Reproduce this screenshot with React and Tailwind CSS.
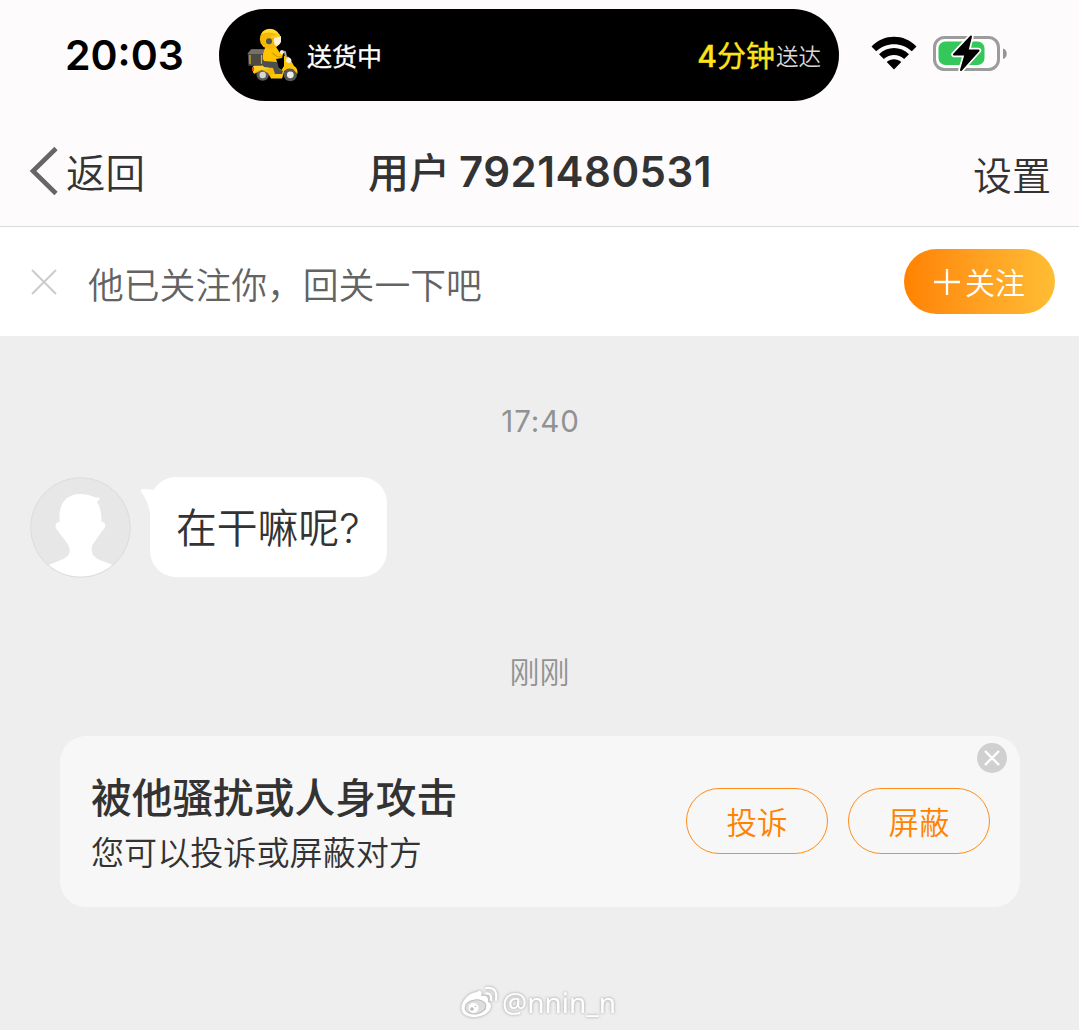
import React from 'react';

const CJK = "font-['Noto_Sans_CJK_SC',sans-serif]";
const LATIN = "font-['Inter',sans-serif]";

function Courier() {
  return (
    <svg width="52" height="56" viewBox="0 -1 52 56" className="shrink-0">
      <circle cx="15.700" cy="46.500" r="6.200" fill="#5c5c5c" />
      <circle cx="15.700" cy="47" r="3.200" fill="#d6d6d2" />
      <circle cx="43.300" cy="46.500" r="6.700" fill="#565858" />
      <circle cx="43.300" cy="46.800" r="3.400" fill="#ececec" />
      <path d="M6 38H29L37 44L35 50.500H24L21 45L15 42L7 46L5.500 42Z" fill="#f6b906" />
      <path d="M7 37H19L22 41L11 42L6 45Z" fill="#ffd026" />
      <path d="M5 39H7V43H5Z" fill="#e64020" />
      <path d="M37 28L42 29L47 38Q51 40 50.500 46L46 41Q39 39 36 45L35 50H24L25 46H32L37 38Z" fill="#ffc50a" />
      <path d="M0.700 25L4 21.300H18.700V34L15 37.700H1.500Z" fill="#4d4943" />
      <path d="M0.700 26L4.500 21.300H18.700L16 26Z" fill="#77706a" />
      <path d="M3 27V36M14.500 27V36" stroke="#d9b21a" strokeWidth="1.200" />
      <path d="M17 31.500L30 33L32 41L36 43L35 46H28L26 40L17 39L14.500 36Z" fill="#4c4e50" />
      <path d="M18 20L29 19L33 25L36 26L35 30L29 31L30 34L17 33Q14 30 18 20Z" fill="#ffc400" />
      <path d="M25 25L30 28.500L35 29" stroke="#d69600" strokeWidth="1.200" fill="none" />
      <path d="M34 23L38 24L39 29" stroke="#aaa" strokeWidth="2" fill="none" />
      <circle cx="34.800" cy="24.200" r="2" fill="#f5eadb" />
      <circle cx="41.700" cy="32.300" r="2.600" fill="#f4f4ed" />
      <circle cx="23" cy="11" r="10.200" fill="#f7b806" />
      <path d="M14 6C18-1 29-1 33 8Q24 2 14 6Z" fill="#ffda32" />
      <path d="M27 10L34 8V14Q32 18 29 18Q26 16 27 10Z" fill="#fff0d6" />
      <path d="M24 9L33 7.500" stroke="#ffce1c" strokeWidth="2" />
      <circle cx="22" cy="13.200" r="3" fill="#51534e" />
    </svg>
  );
}

function Wifi() {
  return (
    <svg width="46" height="34" viewBox="0 0 46 34" className="shrink-0">
      <path d="M0.500 10.500C13-2.500 33-2.500 45.500 10.500L40.800 15.300C30.800 5.800 15.200 5.800 5.200 15.300Z" />
      <path d="M8 18.300C16.400 10 29.600 10 38 18.300L33.200 23.100C27.200 17.700 18.800 17.700 12.800 23.100Z" />
      <path d="M15.700 26C20 22.300 26 22.300 30.300 26L23 33.500Z" />
    </svg>
  );
}

function Battery() {
  return (
    <svg width="76" height="42" viewBox="0 0 76 42" className="shrink-0">
      <rect x="2.500" y="5.500" width="64" height="32" rx="10" fill="#fefcfd" stroke="#9d9c9d" strokeWidth="3" />
      <path d="M71 16.500c5 1.500 5 9 0 10.500z" fill="#969596" />
      <rect x="6.500" y="9.500" width="46" height="23.500" rx="7" fill="#34c759" />
      <path d="M39 4.500L22 22.500h11.500l-4.500 15.500L46.500 18.500H35.500Z" fill="#000" stroke="#fff" strokeWidth="5.500" strokeLinejoin="round" />
      <path d="M39 4.500L22 22.500h11.500l-4.500 15.500L46.500 18.500H35.500Z" stroke="#000" strokeWidth="2" strokeLinejoin="round" />
    </svg>
  );
}

function StatusBar() {
  return (
    <div className="flex h-[110px] pt-[9px]">
      <div className={`w-[219px] pl-[65px] text-[41px] font-semibold leading-[92px] text-black ${LATIN}`}>20:03</div>
      <div className="flex h-[92px] w-[620px] items-center rounded-full bg-black pl-[28px] pr-[18px]">
        <Courier />
        <span className="ml-[8px] text-[25px] font-normal leading-[36px] text-white [-webkit-text-stroke:0.300px_#fff]">送货中</span>
        <div className="ml-auto flex items-center whitespace-nowrap">
          <span className="text-[29px] font-normal leading-[36px] text-[#ffe31a] [-webkit-text-stroke:0.400px_#ffe31a]"><span className={`text-[30px] font-medium ${LATIN}`}>4</span>分钟</span>
          <span className="ml-px pb-px text-[22.500px] font-[350] leading-[34px] text-[#d8d8d8]">送达</span>
        </div>
      </div>
      <div className="flex h-[88px] items-center pl-[32px]">
        <Wifi />
        <div className="ml-[15px]"><Battery /></div>
      </div>
    </div>
  );
}

function NavBar() {
  return (
    <div className="grid h-[116px] grid-cols-[1fr_auto_1fr] pl-[29px] pr-[28px]">
      <div className="flex h-[122px] items-center">
        <svg width="30" height="50" viewBox="0 0 30 50" fill="none" stroke="#666" strokeWidth="4.600">
          <path d="M27 2.500L4 25L27 47.500" />
        </svg>
        <span className="ml-[7px] text-[39.500px] font-[350] leading-[122px] text-[#333]">返回</span>
      </div>
      <h1 className="flex whitespace-nowrap leading-[121px] text-[#333]">
        <span className="text-[41px] font-medium">用户</span>
        <span className={`ml-[9px] text-[42px] font-semibold leading-[123px] tracking-[0.500px] ${LATIN}`}>7921480531</span>
      </h1>
      <span className="justify-self-end text-[39px] font-[350] leading-[126px] text-[#333]">设置</span>
    </div>
  );
}

function FollowBar() {
  return (
    <section className="flex h-[109px] items-center bg-white pl-[30px] pr-6">
      <svg width="28" height="28" viewBox="0 0 28 28" stroke="#ccc" strokeWidth="2">
        <path d="M2 2L26 26M26 2L2 26" />
      </svg>
      <span className="ml-[30px] pt-[2px] text-[35.800px] font-[350] leading-[40px] text-[#636363]">他已关注你，回关一下吧</span>
      <button className="ml-auto flex h-[65px] w-[151px] items-center justify-center rounded-full bg-gradient-to-r from-[#ff8200] to-[#ffbd34] text-white">
        <svg width="26" height="26" viewBox="0 0 26 26" stroke="white" strokeWidth="2.300"><path d="M13 0V26M0 13H26" /></svg>
        <span className="ml-[5px] pb-[2px] text-[30px] font-[350] leading-[60px]">关注</span>
      </button>
    </section>
  );
}

function Avatar() {
  return (
    <svg width="101" height="101" viewBox="0 0 101 101" className="shrink-0">
      <defs><clipPath id="avatar"><circle cx="50.500" cy="50" r="49.500" /></clipPath></defs>
      <circle cx="50.500" cy="50.500" r="49.800" fill="#e7e7e7" stroke="#dcdcdc" />
      <path clipPath="url(#avatar)" fill="#fff" d="M29.500 45V38C30 24 39 17 50 17C59 17 64 21 70 20.500Q69 24 67 25Q72 32 71.500 45C77 45 76 51 72 54L63 67Q61 70 62 75C63 83 76 84 84 89V101H17V89C26 84 39 82 39.500 75Q40 70 37 66L28 54C24 50 25 45 29.500 45Z" />
    </svg>
  );
}

function Action({ children }) {
  return <button className="h-[66px] w-[142px] rounded-full border-[1.500px] border-[#ff8d19] text-[30.500px] font-[350] leading-[61px] text-[#ff8200]">{children}</button>;
}

function ReportCard() {
  return (
    <section className="relative ml-[60px] mt-[43px] flex h-[171px] w-[960px] rounded-[26px] bg-[#f7f7f7] pl-[31px] pr-[30px]">
      <div className="pt-[32px] text-[#333]">
        <h2 className="text-[40.700px] font-medium leading-[56px]">被他骚扰或人身攻击</h2>
        <p className="text-[33.100px] font-[350] leading-[54px]">您可以投诉或屏蔽对方</p>
      </div>
      <div className="ml-auto flex gap-5 pt-[52px]"><Action>投诉</Action><Action>屏蔽</Action></div>
      <button aria-label="关闭" className="absolute right-[13px] top-[7px]">
        <svg width="30" height="30" viewBox="0 0 30 30"><circle cx="15" cy="15" r="15" fill="#d0d0d0" /><path d="M8 8L22 22M22 8L8 22" stroke="#fff" strokeWidth="2.400" /></svg>
      </button>
    </section>
  );
}

function Watermark() {
  return (
    <div className="mt-[76px] flex h-[40px] items-center justify-center pr-[3px] text-white drop-shadow-[0_0_1.500px_#999]">
      <svg width="40" height="36" viewBox="0 0 40 36" fill="none">
        <path d="M17 7C20 4 23 7 21 11C26 10 29 12 28 17C32 18 32 23 28 27C21 34 5 34 2 26C-1 18 9 7 17 7Z" fill="white" />
        <ellipse cx="15.500" cy="22" rx="10.500" ry="7" fill="#ddd" stroke="#bbb" transform="rotate(-7 15 22)" />
        <circle cx="13.500" cy="23" r="5" fill="white" /><circle cx="12" cy="24" r="1.800" fill="#bbb" /><circle cx="15.500" cy="21.500" r=".8" fill="#bbb" />
        <path d="M26 8.500Q32 8 31 15M26 3Q38 1.500 36 15" stroke="white" strokeWidth="2.200" strokeLinecap="round" />
      </svg>
      <span className="ml-[2px] pb-[2px] font-['Noto_Sans',sans-serif] text-[28px] leading-[36px]">@nnin_n</span>
    </div>
  );
}

export default function App() {
  return (
    <main className={`h-[1030px] w-[1079px] overflow-hidden bg-[#eee] ${CJK}`}>
      <header className="h-[227px] border-b border-[#dcdadb] bg-[#fdfbfc]"><StatusBar /><NavBar /></header>
      <FollowBar />
      <div className={`mt-[64px] pl-[2px] text-center text-[29.500px] leading-[42px] tracking-[0.900px] text-[#929292] ${LATIN}`}>17:40</div>
      <div className="ml-[30px] mt-[35px] flex h-[101px]">
        <Avatar />
        <div className="relative ml-[19px] h-[100px] w-[237px] rounded-[26px] bg-white pl-[26px] text-[40.800px] font-[350] leading-[98px] text-[#333]">
          <svg className="absolute left-[-10px] top-[11px]" width="20" height="35" viewBox="0 0 20 35"><path d="M16 2L3 1Q0 1 1 4Q8 12 10 25V35H20Z" fill="white" /></svg>
          <span className="relative whitespace-nowrap">在干嘛呢<span className={LATIN}>?</span></span>
        </div>
      </div>
      <div className="mt-[69px] text-center text-[30px] font-[350] leading-[46px] text-[#929292]">刚刚</div>
      <ReportCard />
      <Watermark />
    </main>
  );
}
